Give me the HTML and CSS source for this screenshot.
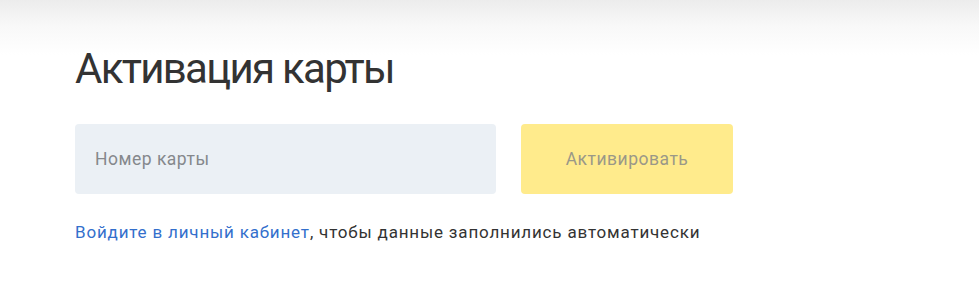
FILE: index.html
```html
<!DOCTYPE html>
<html lang="ru">
<head>
<meta charset="utf-8">
<title>Активация карты</title>
<link rel="stylesheet" href="styles.css">
</head>
<body>
<div class="page">
  <main class="content">
    <h1 class="title">Активация карты</h1>
    <form class="form">
      <input class="field" type="text" placeholder="Номер карты">
      <button class="submit" type="button">Активировать</button>
    </form>
    <p class="hint"><a class="link" href="#">Войдите в личный кабинет</a>, чтобы данные заполнились автоматически</p>
  </main>
</div>
</body>
</html>
```

FILE: styles.css
```css
html, body {
  margin: 0;
  padding: 0;
  background: #fff;
}
body {
  font-family: Roboto, "Noto Sans", sans-serif;
  color: #333;
}
.page {
  min-height: 285px;
  background: linear-gradient(to bottom, #ececec 0px, #f8f8f8 25px, #fff 55px, #fff 100%);
}
.content {
  padding: 45px 0 0 75px;
}
.title {
  margin: 0;
  font-weight: 400;
  font-size: 42px;
  line-height: 48px;
  color: #333;
  letter-spacing: -1.7px;
}
.form {
  display: flex;
  gap: 25px;
  margin-top: 31px;
}
.field {
  box-sizing: border-box;
  width: 421px;
  height: 70px;
  border: none;
  border-radius: 4px;
  background: #ebf0f5;
  padding: 0 20px;
  font-family: inherit;
  font-size: 17.5px;
  letter-spacing: 0.5px;
  color: #333;
  outline: none;
}
.field::placeholder {
  color: #85888c;
}
.submit {
  box-sizing: border-box;
  width: 212px;
  height: 70px;
  border: none;
  border-radius: 4px;
  background: #ffeb8c;
  font-family: inherit;
  font-size: 17.5px;
  letter-spacing: 0.5px;
  color: #9a9888;
}
.hint {
  margin: 27px 0 0;
  font-size: 17px;
  line-height: 22px;
  letter-spacing: 0.82px;
  color: #333;
}
.link {
  color: #336fcc;
  text-decoration: none;
}
```
